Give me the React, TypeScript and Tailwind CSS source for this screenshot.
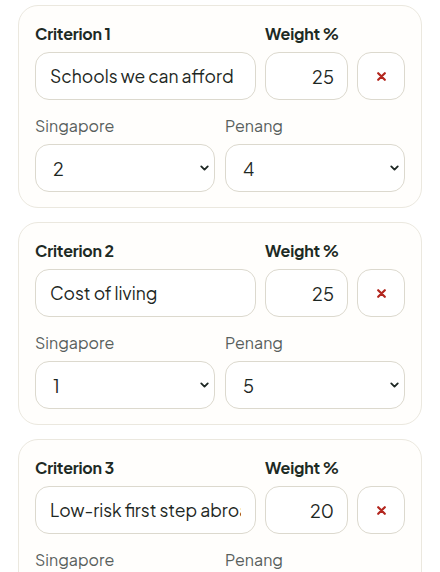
import { ChevronDown } from "lucide-react";

type Criterion = {
  name: string;
  weight: number;
  singapore: number;
  penang: number;
};

const criteria: Criterion[] = [
  { name: "Schools we can afford", weight: 25, singapore: 2, penang: 4 },
  { name: "Cost of living", weight: 25, singapore: 1, penang: 5 },
  { name: "Low-risk first step abroad", weight: 20, singapore: 3, penang: 4 },
];

const font = { fontFamily: '"Plus Jakarta Sans", Inter, "Noto Sans", sans-serif' };

function ScoreSelect({ label, value }: { label: string; value: number }) {
  return (
    <div className="min-w-0">
      <p className="mb-1.5 text-[16px] leading-6 text-[#58605c]">{label}</p>
      <div className="relative">
        <select
          defaultValue={value}
          className="h-12 w-full appearance-none rounded-[14px] border border-[#dcd9ce] bg-white pl-[17px] pr-8 text-[18px] text-[#1d2723] outline-none"
        >
          {[1, 2, 3, 4, 5].map((n) => (
            <option key={n} value={n}>
              {n}
            </option>
          ))}
        </select>
        <ChevronDown
          size={13}
          strokeWidth={3.4}
          className="pointer-events-none absolute right-[4px] top-1/2 -translate-y-1/2 text-[#1d2723]"
        />
      </div>
    </div>
  );
}

function CriterionCard({ index, item }: { index: number; item: Criterion }) {
  return (
    <section className="rounded-[20px] border border-[#ebe8df] bg-[#fffefc] px-4 pb-[15px] pt-4">
      <div className="grid grid-cols-[1fr_83px_48px] items-end gap-x-[9px]">
        <div className="min-w-0">
          <p className="mb-1.5 text-[16px] font-bold leading-6 tracking-[-0.2px] text-[#1d2a24]">
            Criterion {index + 1}
          </p>
          <input
            type="text"
            defaultValue={item.name}
            className="h-12 w-full rounded-[14px] border border-[#dcd9ce] bg-white px-[14px] text-[17.5px] text-[#1d2723] outline-none"
          />
        </div>
        <div className="min-w-0">
          <p className="mb-1.5 whitespace-nowrap text-[16px] font-bold leading-6 tracking-[-0.2px] text-[#1d2a24]">
            Weight %
          </p>
          <input
            type="text"
            defaultValue={item.weight}
            className="h-12 w-full rounded-[14px] border border-[#dcd9ce] bg-white px-[13px] text-right text-[18px] text-[#1d2723] outline-none"
          />
        </div>
        <button
          type="button"
          aria-label={`Remove criterion ${index + 1}`}
          className="grid h-12 w-full place-items-center rounded-[14px] border border-[#dcd9ce] bg-white"
        >
          <svg width="9" height="9" viewBox="0 0 9 9" className="text-[#b3261e]">
            <path d="M1.2 1.2 L7.8 7.8 M7.8 1.2 L1.2 7.8" stroke="currentColor" strokeWidth="2.2" strokeLinecap="round" />
          </svg>
        </button>
      </div>

      <div className="mt-[14px] grid grid-cols-2 gap-x-2.5">
        <ScoreSelect label="Singapore" value={item.singapore} />
        <ScoreSelect label="Penang" value={item.penang} />
      </div>
    </section>
  );
}

export default function App() {
  return (
    <div className="min-h-screen bg-white px-[18px] pt-[5px]" style={font}>
      <div className="flex flex-col gap-[14px]">
        {criteria.map((item, i) => (
          <CriterionCard key={i} index={i} item={item} />
        ))}
      </div>
    </div>
  );
}
